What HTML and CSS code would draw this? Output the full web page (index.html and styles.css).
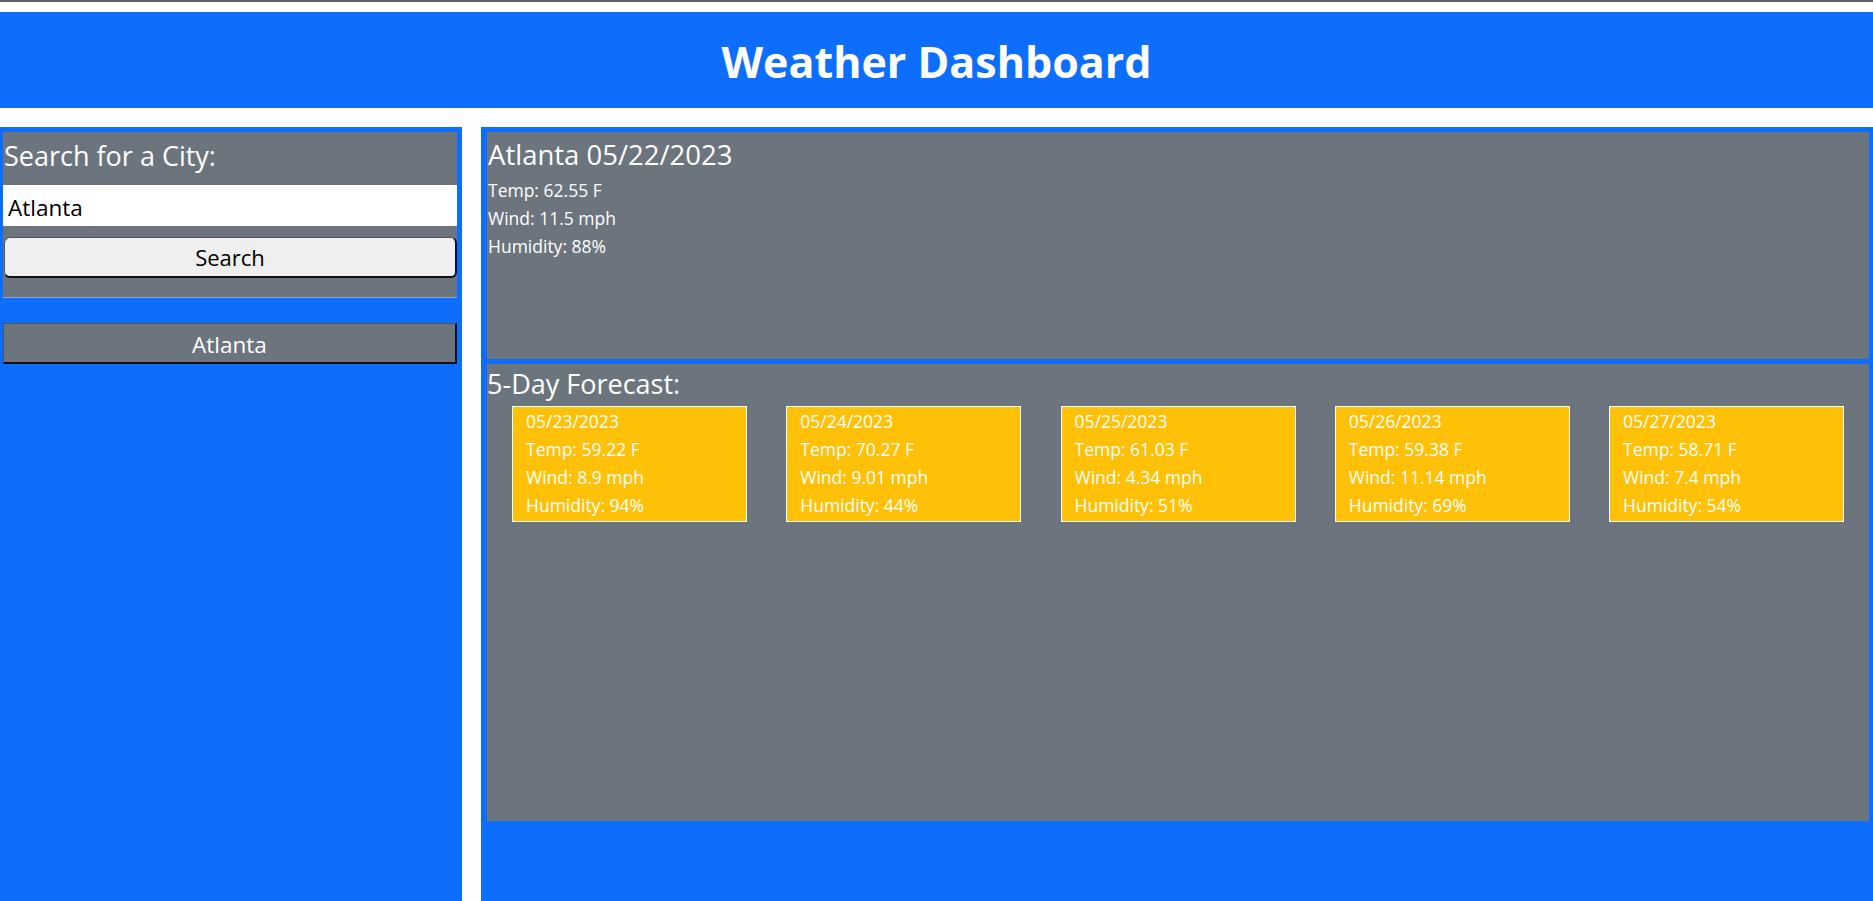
FILE: index.html
```html
<!DOCTYPE html>
<html lang="en">
<head>
<meta charset="utf-8">
<title>Weather Dashboard</title>
<link rel="stylesheet" href="styles.css">
</head>
<body>
<div class="topline"></div>
<header class="header">
  <h1 class="header-title">Weather Dashboard</h1>
</header>
<main class="main">
  <aside class="sidebar">
    <div class="search-box">
      <h2 class="search-title">Search for a City:</h2>
      <input class="search-input" type="text" value="Atlanta">
      <button class="search-btn" type="button">Search</button>
    </div>
    <button class="history-btn" type="button">Atlanta</button>
  </aside>
  <section class="content">
    <div class="current">
      <h3 class="current-title">Atlanta 05/22/2023</h3>
      <p class="stat">Temp: 62.55 F</p>
      <p class="stat">Wind: 11.5 mph</p>
      <p class="stat">Humidity: 88%</p>
    </div>
    <div class="forecast">
      <h4 class="forecast-title">5-Day Forecast:</h4>
      <div class="cards">
        <div class="card">
          <p>05/23/2023</p>
          <p>Temp: 59.22 F</p>
          <p>Wind: 8.9 mph</p>
          <p>Humidity: 94%</p>
        </div>
        <div class="card">
          <p>05/24/2023</p>
          <p>Temp: 70.27 F</p>
          <p>Wind: 9.01 mph</p>
          <p>Humidity: 44%</p>
        </div>
        <div class="card">
          <p>05/25/2023</p>
          <p>Temp: 61.03 F</p>
          <p>Wind: 4.34 mph</p>
          <p>Humidity: 51%</p>
        </div>
        <div class="card">
          <p>05/26/2023</p>
          <p>Temp: 59.38 F</p>
          <p>Wind: 11.14 mph</p>
          <p>Humidity: 69%</p>
        </div>
        <div class="card">
          <p>05/27/2023</p>
          <p>Temp: 58.71 F</p>
          <p>Wind: 7.4 mph</p>
          <p>Humidity: 54%</p>
        </div>
      </div>
    </div>
  </section>
</main>
</body>
</html>
```
FILE: styles.css
```css
* { box-sizing: border-box; }

html, body {
  margin: 0;
  padding: 0;
  height: 100%;
  overflow: hidden;
}

body {
  font-family: "Open Sans", "Noto Sans", sans-serif;
  color: #fff;
  background: #fff;
}

.topline {
  height: 2px;
  background: #5f6166;
}

.header {
  margin-top: 10px;
  height: 96px;
  background: #0d6efd;
  display: flex;
  align-items: center;
  justify-content: center;
}

.header-title {
  margin: 0;
  font-size: 43px;
  font-weight: 700;
  line-height: 1;
  color: #fff;
  padding-top: 2px;
}

.main {
  margin-top: 19px;
  display: flex;
  gap: 19px;
  height: 774px;
}

.sidebar {
  width: 462px;
  flex: none;
  background: #0d6efd;
  padding: 5px 5px 0 3px;
}

.search-box {
  background: #6c757d;
  height: 166px;
  padding-top: 8px;
  border-bottom: 1px solid #8fa6c4;
  display: flex;
  flex-direction: column;
}

.search-title {
  margin: 0;
  font-size: 27px;
  font-weight: 400;
  line-height: 32px;
  height: 32px;
  padding-left: 1px;
}

.search-input {
  margin-top: 13px;
  height: 41px;
  width: 454px;
  border: none;
  background: #fff;
  color: #000;
  font-family: inherit;
  font-size: 22.5px;
  padding: 3px 5px 0;
  outline: none;
}

.search-btn {
  margin-top: 11px;
  margin-left: 1px;
  height: 41px;
  width: 453px;
  background: #efefef;
  color: #000;
  font-family: inherit;
  font-size: 22px;
  border-style: solid;
  border-width: 1px 2px 2px 1px;
  border-color: #555 #111 #111 #555;
  border-radius: 6px;
  padding: 0;
}

.history-btn {
  display: block;
  margin-top: 25px;
  height: 41px;
  width: 454px;
  background: #6c757d;
  color: #fff;
  font-family: inherit;
  font-size: 22.5px;
  border-style: solid;
  border-width: 1px 2px 2px 1px;
  border-color: #4a5560 #111 #111 #4a5560;
  padding: 2px 0 0;
}

.content {
  flex: 1;
  background: #0d6efd;
  padding: 5px 4px 0 6px;
  display: flex;
  flex-direction: column;
  gap: 5px;
}

.current {
  background: #6c757d;
  height: 227px;
  padding: 5px 0 0 1px;
}

.current-title {
  margin: 0 0 3px;
  font-size: 27.5px;
  font-weight: 400;
  line-height: 36px;
}

.stat {
  margin: 0;
  font-size: 17.5px;
  line-height: 28px;
}

.forecast {
  background: #6c757d;
  height: 457px;
  padding: 4px 0 0 0;
}

.forecast-title {
  margin: 0 0 6px;
  font-size: 27px;
  font-weight: 400;
  line-height: 32px;
}

.cards {
  display: flex;
  justify-content: space-between;
  padding: 0 25px;
}

.card {
  width: 235px;
  height: 116px;
  background: #ffc107;
  border: 1px solid #fff;
  padding: 0 13px;
}

.card p {
  margin: 0;
  font-size: 17.5px;
  line-height: 28px;
  color: #fff;
}
```
